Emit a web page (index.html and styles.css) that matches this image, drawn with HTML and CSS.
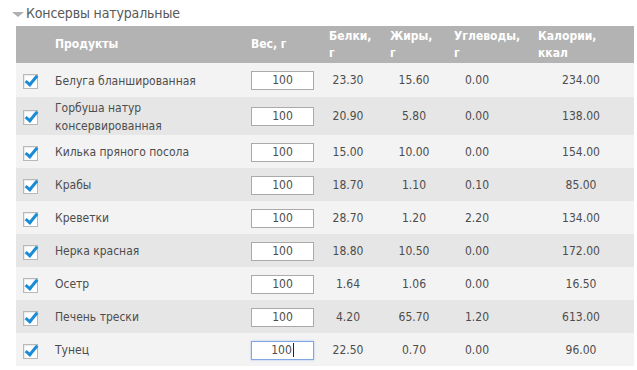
FILE: index.html
```html
<!DOCTYPE html>
<html lang="ru">
<head>
<meta charset="utf-8">
<link rel="stylesheet" href="styles.css">
</head>
<body>
<div class="group">
  <div class="group-title"><span class="caret"></span>Консервы натуральные</div>
  <table class="foods">
    <colgroup>
      <col class="c-check"><col class="c-name"><col class="c-weight"><col class="c-prot"><col class="c-fat"><col class="c-carb"><col class="c-kcal">
    </colgroup>
    <thead>
      <tr>
        <th></th>
        <th>Продукты</th>
        <th>Вес, г</th>
        <th>Белки,<br>г</th>
        <th>Жиры,<br>г</th>
        <th>Углеводы,<br>г</th>
        <th>Калории,<br>ккал</th>
      </tr>
    </thead>
    <tbody>
      <tr><td class="chk"><span class="cb"></span></td><td class="name">Белуга бланшированная</td><td class="w"><span class="inp">100</span></td><td class="prot">23.30</td><td class="fat">15.60</td><td class="carb">0.00</td><td class="kcal">234.00</td></tr>
      <tr class="tall"><td class="chk"><span class="cb"></span></td><td class="name">Горбуша натур<br>консервированная</td><td class="w"><span class="inp">100</span></td><td class="prot">20.90</td><td class="fat">5.80</td><td class="carb">0.00</td><td class="kcal">138.00</td></tr>
      <tr><td class="chk"><span class="cb"></span></td><td class="name">Килька пряного посола</td><td class="w"><span class="inp">100</span></td><td class="prot">15.00</td><td class="fat">10.00</td><td class="carb">0.00</td><td class="kcal">154.00</td></tr>
      <tr><td class="chk"><span class="cb"></span></td><td class="name">Крабы</td><td class="w"><span class="inp">100</span></td><td class="prot">18.70</td><td class="fat">1.10</td><td class="carb">0.10</td><td class="kcal">85.00</td></tr>
      <tr><td class="chk"><span class="cb"></span></td><td class="name">Креветки</td><td class="w"><span class="inp">100</span></td><td class="prot">28.70</td><td class="fat">1.20</td><td class="carb">2.20</td><td class="kcal">134.00</td></tr>
      <tr><td class="chk"><span class="cb"></span></td><td class="name">Нерка красная</td><td class="w"><span class="inp">100</span></td><td class="prot">18.80</td><td class="fat">10.50</td><td class="carb">0.00</td><td class="kcal">172.00</td></tr>
      <tr><td class="chk"><span class="cb"></span></td><td class="name">Осетр</td><td class="w"><span class="inp">100</span></td><td class="prot">1.64</td><td class="fat">1.06</td><td class="carb">0.00</td><td class="kcal">16.50</td></tr>
      <tr><td class="chk"><span class="cb"></span></td><td class="name">Печень трески</td><td class="w"><span class="inp">100</span></td><td class="prot">4.20</td><td class="fat">65.70</td><td class="carb">1.20</td><td class="kcal">613.00</td></tr>
      <tr><td class="chk"><span class="cb"></span></td><td class="name">Тунец</td><td class="w"><span class="inp focus">100<span class="caretline"></span></span></td><td class="prot">22.50</td><td class="fat">0.70</td><td class="carb">0.00</td><td class="kcal">96.00</td></tr>
    </tbody>
  </table>
</div>
</body>
</html>
```
FILE: styles.css
```css
html, body {
  margin: 0;
  padding: 0;
  background: #fff;
}
body {
  font-family: "DejaVu Sans Condensed", "DejaVu Sans", sans-serif;
  font-size: 12px;
  color: #4d4d4d;
}
.group-title {
  height: 26px;
  display: flex;
  align-items: center;
  padding-left: 12px;
  font-size: 14px;
  color: #585858;
  box-sizing: border-box;
  padding-bottom: 1px;
  letter-spacing: -0.15px;
}
.caret {
  width: 0;
  height: 0;
  border-left: 6px solid transparent;
  border-right: 6px solid transparent;
  border-top: 5px solid #b0b0b0;
  margin-right: 2px;
  margin-top: 3px;
}
.foods {
  margin-left: 16px;
  width: 618px;
  border-collapse: collapse;
  table-layout: fixed;
}
.c-check { width: 33px; }
.c-name { width: 196px; }
.c-weight { width: 78px; }
.c-prot { width: 61px; }
.c-fat { width: 64px; }
.c-carb { width: 84px; }
.c-kcal { width: 102px; }
thead tr {
  background: #b3b3b3;
  height: 37px;
}
th {
  color: #fff;
  font-weight: bold;
  text-align: left;
  padding: 0 0 0 6px;
  line-height: 17px;
  font-size: 12px;
  vertical-align: middle;
}
tbody tr { height: 33px; background: #f3f3f3; }
tbody tr:nth-child(even) { background: #e6e6e6; }
tbody tr:first-child { height: 34px; }
tbody tr.tall { height: 38px; }
td {
  padding: 0;
  vertical-align: middle;
  line-height: 18px;
}
td.chk { padding-left: 7px; }
td.name { padding-left: 6px; padding-top: 1px; }
td.w { padding-left: 6px; }
td.prot { text-align: center; padding-right: 11px; }
td.fat { text-align: center; padding-right: 4px; }
td.carb { text-align: center; padding-right: 26px; }
td.kcal { text-align: center; padding-right: 4px; }
.cb {
  display: block;
  width: 15px;
  height: 15px;
  box-sizing: border-box;
  border: 1px solid #b8b8b8;
  background: #fff;
  position: relative;
  margin-top: 3px;
  box-shadow: inset 1px 1px 1px rgba(0,0,0,0.08);
}
.cb::after {
  content: "";
  position: absolute;
  left: 4px;
  top: -2px;
  width: 4px;
  height: 10px;
  border-right: 3px solid #1b8bd6;
  border-bottom: 3px solid #1b8bd6;
  transform: rotate(40deg);
  transform-origin: center;
}
.inp {
  display: block;
  width: 63px;
  height: 19px;
  box-sizing: border-box;
  border: 1px solid #aaa;
  background: #fff;
  text-align: center;
  line-height: 17px;
  color: #4d4d4d;
  margin-top: 1px;
}
.inp.focus {
  border-color: #7fa6e2;
  box-shadow: 0 0 2px #a9c4ee;
}
.caretline {
  display: inline-block;
  width: 1px;
  height: 14px;
  background: #222;
  vertical-align: -3px;
  margin-left: 1px;
}
```
